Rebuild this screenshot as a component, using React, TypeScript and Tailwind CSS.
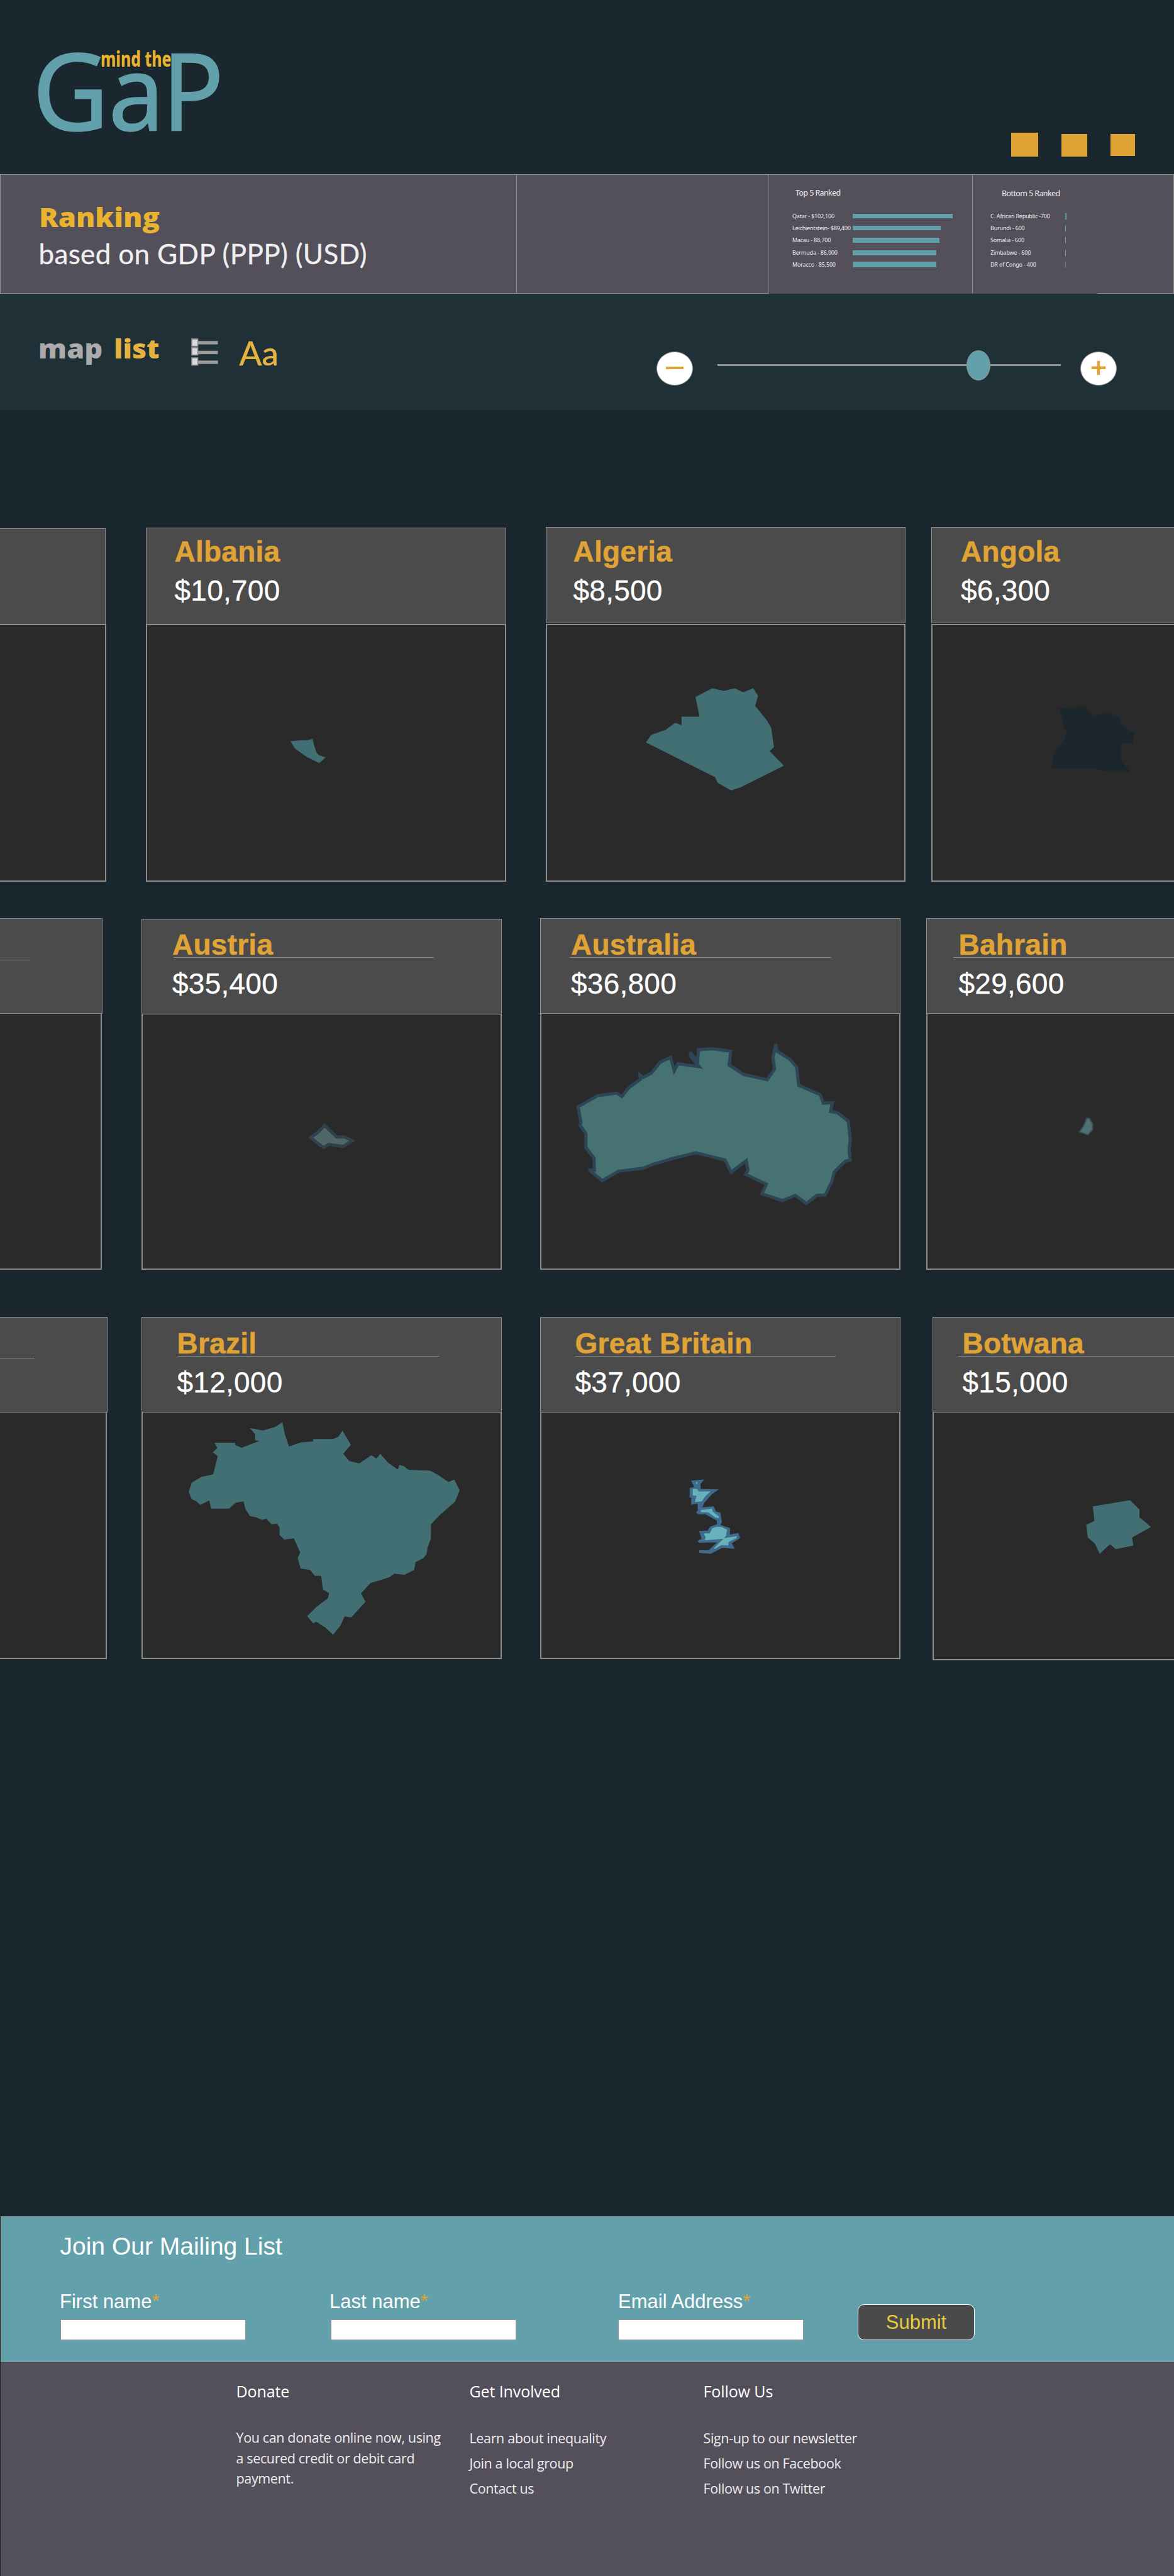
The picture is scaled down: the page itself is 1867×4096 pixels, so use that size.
import type { ReactNode } from 'react';

function Logo() {
  return (
    <svg className="block h-[277px] w-[400px]" viewBox="0 0 400 277" aria-label="mind the GaP">
      <g className='font-["Noto_Sans",sans-serif]' fill="#62a1ac" stroke="#62a1ac" strokeWidth="1.6" fontSize="170">
        <text transform="translate(51.5 207.2) scale(.985 1)">G</text>
        <text transform="translate(172.6 207.2) scale(.93 .97)">a</text>
        <text transform="translate(257.6 207.2) scale(.96 1)">P</text>
      </g>
      <text
        className='font-["Noto_Sans",sans-serif] font-extrabold'
        fill="#e9b32f"
        fontSize="33"
        x="160"
        y="106"
        textLength="112.5"
        lengthAdjust="spacingAndGlyphs"
      >
        mind the
      </text>
    </svg>
  );
}

const top5 = [
  { label: 'Qatar - $102,100', bar: 'h-[7px] w-[159px]' },
  { label: 'Leichientstein- $89,400', bar: 'h-[7px] w-[140.5px]' },
  { label: 'Macau - 88,700', bar: 'h-[8px] w-[138px]' },
  { label: 'Bermuda - 86,000', bar: 'h-[8px] w-[133.5px]' },
  { label: 'Moracco - 85,500', bar: 'h-[9px] w-[133.5px]' },
];

const bottom5 = [
  { label: 'C. African Republic -700', bar: 'h-[10px] w-[2px]' },
  { label: 'Burundi - 600', bar: 'h-[10px] w-px' },
  { label: 'Somalia - 600', bar: 'h-[10px] w-px' },
  { label: 'Zimbabwe - 600', bar: 'h-[10px] w-px' },
  { label: 'DR of Congo - 400', bar: 'h-[10px] w-px opacity-70' },
];

function Ranked({ items, labelClass }: { items: { label: string; bar: string }[]; labelClass: string }) {
  return (
    <ul>
      {items.map((item) => (
        <li key={item.label} className="flex h-[19.3px] items-center">
          <span className={`shrink-0 whitespace-nowrap text-[9px] tracking-[-0.2px] text-[#ececec] ${labelClass}`}>
            {item.label}
          </span>
          <span className={`bg-[#62a1ac] ${item.bar}`} />
        </li>
      ))}
    </ul>
  );
}

function RankingBand() {
  return (
    <section className="flex h-[190px] border-x border-t border-[#918f90] bg-[#53505b]">
      <div className="w-[821px] border-r border-b border-[#918f90] pl-[60.5px]">
        <h1 className='mt-[45px] w-fit origin-left scale-x-[1.055] font-["Open_Sans",sans-serif] text-[43px] leading-[43px] font-extrabold text-[#e9b32f]'>
          Ranking
        </h1>
        <p className='mt-[15px] font-["Lato",sans-serif] text-[44px] leading-[44px] tracking-[0.35px] text-[#f0eff0] [-webkit-text-stroke:0.3px_#f0eff0]'>
          based on GDP (PPP) (USD)
        </p>
      </div>
      <div className="w-[399px] border-b border-[#918f90]" />
      <div className='w-[325px] border-l border-[#918f90] pl-[38px] font-["Noto_Sans",sans-serif]'>
        <h2 className="mt-[22px] mb-[21px] pl-[5px] text-[12.5px] leading-[13px] tracking-[-0.6px] text-[#ececec]">
          Top 5 Ranked
        </h2>
        <Ranked items={top5} labelClass="w-[95.5px]" />
      </div>
      <div className='w-[199px] border-l border-[#918f90] pl-[28px] font-["Noto_Sans",sans-serif]'>
        <h2 className="mt-[23px] mb-[20px] pl-[18px] text-[12.5px] leading-[13px] tracking-[-0.6px] text-[#ececec]">
          Bottom 5 Ranked
        </h2>
        <Ranked items={bottom5} labelClass="w-[118.5px]" />
      </div>
      <div className="flex-1 border-b border-[#918f90]" />
    </section>
  );
}

function ListIcon() {
  return (
    <svg className="block h-[46px] w-[44px]" viewBox="0 0 44 46">
      {[5.2, 20.8, 36.3].map((y) => (
        <rect key={y} x="12" y={y} width="31.5" height="5.4" fill="#9c9c9c" />
      ))}
      {[2, 15.9, 32].map((y) => (
        <rect key={y} x="2" y={y} width="9.5" height="11.6" fill="#d9d9d9" stroke="#8f9092" strokeWidth="1.6" />
      ))}
    </svg>
  );
}

function Controls() {
  return (
    <section className="flex h-[185px] items-start bg-[#203037]">
      <a className='mt-[64.5px] ml-[60.5px] w-[120.5px] font-["Open_Sans",sans-serif] text-[43px] leading-[43px] font-extrabold text-[#ababab]'>
        <span className="inline-block origin-left scale-x-[1.05]">map</span>
      </a>
      <a className='mt-[64.5px] w-[121.5px] font-["Open_Sans",sans-serif] text-[43px] leading-[43px] font-extrabold text-[#e4b240]'>
        <span className="inline-block origin-left scale-x-[1.04]">list</span>
      </a>
      <div className="mt-[70px]">
        <ListIcon />
      </div>
      <span className='mt-[66.5px] ml-[34px] w-[663px] font-["Lato",sans-serif] text-[53px] leading-[53px] text-[#e8b33f] [-webkit-text-stroke:0.6px_#e8b33f]'>
        Aa
      </span>
      <button className="mt-[92px] flex h-[54px] w-[58px] items-center justify-center rounded-[50%] border border-[#949598] bg-white">
        <span className="mb-[2px] h-[4px] w-[28px] bg-[#e0a335]" />
      </button>
      <div className="relative mt-[90px] ml-[39px] flex h-[48px] w-[546px] items-center">
        <div className="mb-[1px] h-[3px] w-full bg-[#949598]" />
        <div className="absolute top-0 left-[396px] h-[48px] w-[38px] rounded-[50%] border border-[#949598] bg-[#62a1ac]" />
      </div>
      <button className="mt-[92px] ml-[31px] flex h-[54px] w-[58px] items-center justify-center rounded-[50%] border border-[#949598] bg-white">
        <svg className="mb-[2px] block h-[24px] w-[24px]" viewBox="0 0 24 24">
          <path d="M.7 11.7h22.6M12 0.7v22.6" stroke="#e0a335" strokeWidth="4.4" />
        </svg>
      </button>
    </section>
  );
}

type CardProps = {
  name?: string;
  price?: string;
  card: string;
  head: string;
  rule?: string;
  body: string;
  viewBox?: string;
  children?: ReactNode;
};

function Card({ name, price, card, head, rule = 'w-0', body, viewBox, children }: CardProps) {
  return (
    <article className={`flex shrink-0 flex-col ${card}`}>
      <header className={`shrink-0 border-[#8e8e8e] bg-[#4b4b4b] font-["Liberation_Sans",Arial,sans-serif] ${head}`}>
        <h3 className="h-[40px] text-[46px] leading-[40px] font-bold tracking-[0.25px] whitespace-nowrap text-[#e0a335] [-webkit-text-stroke:0.5px_#e0a335]">
          {name}
        </h3>
        <div className={`h-px bg-[#8e8e8e] ${rule}`} />
        <p className="mt-[18px] text-[46px] leading-[46px] tracking-[0.25px] text-white [-webkit-text-stroke:0.3px_#ffffff]">{price}</p>
      </header>
      <div className={`min-h-0 flex-1 border-[#8c8c8c] bg-[#2a2a2a] ${body}`}>
        {viewBox && (
          <svg className="block h-full w-full" viewBox={viewBox} preserveAspectRatio="none">
            {children}
          </svg>
        )}
      </div>
    </article>
  );
}

function Countries() {
  return (
    <main className="h-[2872px] overflow-hidden pt-[186px]">
      <div className="flex h-[564px] items-start">
        <Card card="mt-[2px] h-[562px] w-[169px]" head="mr-px h-[152px] border-t border-r" body="border-y-2 border-r-2" />
        <Card
          name="Albania"
          price="$10,700"
          card="mt-[1px] h-[563px] ml-[63px] w-[573px]"
          head="h-[153px] border border-b-0 pt-[17px] pl-[44.5px]"
          body="border-2"
          viewBox="393.4 453.3 955.4 1064.4"
        >
          <path
            d="M776 937L800 934 820 933 835 928 840 958 846 986 852 995 870 1005 853 1028 820 1003 788 968Z"
            fill="#416f74"
          />
        </Card>
        <Card
          name="Algeria"
          price="$8,500"
          card="h-[564px] ml-[62.5px] w-[572px]"
          head="mb-[1px] h-[153px] border pt-[18px] pl-[43px]"
          body="border-2"
          viewBox="35.5 453.3 872.6 1064.4"
        >
          <path
            d="M439 717L467 727 494 717 515 733 539 717 551 748 544 790 558 820 573 852 583 881 590 962 579 978 614 1039 508 1130 485 1142 452 1111 446 1087 277 942 290 911 325 890 349 860 364 870V835H408L398 753Z"
            fill="#416f74"
          />
        </Card>
        <Card
          name="Angola"
          price="$6,300"
          card="h-[564px] ml-[41.5px] w-[386px]"
          head="mb-[1px] h-[153px] border border-r-0 pt-[18px] pl-[46px]"
          body="border-2 border-r-0"
          viewBox="978 453.3 590 1064.4"
        >
          <path
            d="M1285 800L1350 793 1373 840 1399 813 1435 840 1441 870 1471 905 1467 947H1439V1022L1463 1065 1400 1064 1374 1049H1268L1276 980 1296 940 1308 900 1298 880 1296 842Z"
            fill="#1b262d"
          />
        </Card>
      </div>

      <div className="mt-[58px] flex h-[559px] items-start">
        <Card
          card="h-[559px] w-[162.5px]"
          head="h-[152px] border border-l-0 pt-[25px]"
          rule="w-[48px]"
          body="mr-px border-r-2 border-b-2"
        />
        <Card
          name="Austria"
          price="$35,400"
          card="mt-[1px] h-[558px] ml-[62px] w-[573px]"
          head="h-[152px] border pt-[20px] pl-[48.5px]"
          rule="ml-[2px] w-[414px]"
          body="border-2 border-t-0"
          viewBox="407.6 444.7 1023.5 1060.5"
        >
          <path
            d="M928 908L962 956 985 956 1007 972 980 996 940 987 925 1000 910 985 888 959 910 935Z"
            fill="#4f6766"
            stroke="#2e414c"
            strokeWidth="5"
            vectorEffect="non-scaling-stroke"
          />
        </Card>
        <Card
          name="Australia"
          price="$36,800"
          card="h-[559px] ml-[61.5px] w-[572.5px]"
          head="h-[152px] border pt-[21px] pl-[48px]"
          rule="-ml-[1.5px] w-[415px]"
          body="border-2 border-t-0"
          viewBox="22.4 442 873.4 1063"
        >
          <path
            d="M112 830L160 783 207 773 219 787 236 750 264 716 263 697 271 707 291 690 312 645 338 624 347 680 356 650 408 663 388 622 386 602 404 640 406 592 440 588 485 598 481 655 516 695 574 717 592 672 588 625 595 568 598 598 630 632 646 665 651 740 704 780 711 815 733 813 729 850 746 855 772 890 777 965 774 1010 777 1053 765 1057 738 1102 732 1142 716 1198 695 1200 670 1234 643 1200 611 1222 561 1193 572 1153 521 1112 527 1095 523 1055 486 1103 471 1052 400 1022 345 1045 295 1070 270 1087 211 1099 171 1138 138 1093 152 1094 151 1045 131 1000 131 942 117 908 119 895Z"
            fill="#467272"
            stroke="#2e4555"
            strokeWidth="5"
            strokeMiterlimit="3"
            vectorEffect="non-scaling-stroke"
          />
        </Card>
        <Card
          name="Bahrain"
          price="$29,600"
          card="h-[559px] ml-[41.5px] w-[394px]"
          head="h-[152px] border border-r-0 pt-[21px] pl-[50.5px]"
          rule="-ml-[9px] w-[360px]"
          body="border-l-2 border-b-2"
          viewBox="966 442 602 1063"
        >
          <path
            d="M1355 878L1361 878 1369 900 1369 925 1358 947 1337 935 1347 910Z"
            fill="#4f7072"
            stroke="#36505a"
            strokeWidth="2"
            vectorEffect="non-scaling-stroke"
          />
        </Card>
      </div>

      <div className="mt-[75px] flex h-[546px] items-start">
        <Card
          card="h-[544px] w-[170.5px]"
          head="h-[152px] border border-l-0 pt-[24px]"
          rule="w-[55px]"
          body="mr-px border-r-2 border-b-2"
        />
        <Card
          name="Brazil"
          price="$12,000"
          card="h-[544px] ml-[54px] w-[573px]"
          head="h-[152px] border pt-[21px] pl-[56px]"
          rule="ml-[1px] w-[415px]"
          body="border-2 border-t-0"
          viewBox="407.6 455.2 1023.5 1023.5"
        >
          <path
            d="M807 495L814 545 826 597 860 580 895 576V566H952L967 556 979 531 1003 590 981 627 998 657 1027 668 1062 633 1076 648 1087 628 1110 665 1137 693 1142 674 1154 679 1168 694 1230 698 1253 716 1282 745 1299 735 1314 780 1301 827 1256 885 1232 922V980L1222 1020 1220 1044 1211 1062 1188 1080 1184 1112 1157 1132 1127 1128 1113 1143 1059 1167 1032 1210 1045 1245 1004 1310 985 1306 973 1345 952 1382 930 1353 904 1328 895 1335 878 1305 904 1267 937 1231 941 1209 923 1193 918 1137H900L886 1112 859 1106 851 1062 858 1040 840 980 812 985 799 966V935L791 919 776 922 761 898 749 903 732 893 714 887 701 857 696 826 673 832 655 856H603L598 822 572 841 561 826 547 816 539 785 548 748 575 724 609 713 615 680 622 637 608 621 621 603 613 581H672V591L691 602 741 574 729 571V545L714 520 752 530 787 515Z"
            fill="#416f74"
          />
        </Card>
        <Card
          name="Great Britain"
          price="$37,000"
          card="h-[544px] ml-[61.5px] w-[572.5px]"
          head="h-[152px] border pt-[21px] pl-[54.5px]"
          rule="w-[414px]"
          body="border-2 border-t-0"
          viewBox="-1069.7 -453.2 2740.5 1879.9"
        >
          <path
            d="M78 69L178 60 150 95 152 132 290 136 238 172 178 240 165 274 252 265 266 303 302 314 315 388 302 408 376 432 375 482 440 470 453 508 390 550 413 592 315 584 228 630 140 622 141 602 212 602 278 542 138 544 128 532 158 512 138 454 205 452 226 420 277 402 275 375 190 328 130 326 116 312 130 296 127 245 78 254 80 200 66 198 67 124 102 118Z"
            fill="#3f6c8e"
          />
          <path
            d="M118 78L128 80 124 97 117 95ZM90 134L124 132 136 152 228 152 190 185 160 228 106 232 120 186 90 182ZM152 294L212 288 236 282 244 306 290 342 290 357 262 350 210 312 153 310ZM240 432L275 422 312 424 354 446 345 490 332 510 430 494 426 508 365 540 364 566 308 564 262 592 252 588 325 514 180 526 190 506 176 474 222 472Z"
            fill="#66b1ba"
          />
        </Card>
        <Card
          name="Botwana"
          price="$15,000"
          card="h-[546px] ml-[51px] w-[385px]"
          head="h-[152px] border border-r-0 pt-[21px] pl-[47px]"
          rule="-ml-[7px] w-[360px]"
          body="border-l-2 border-b-2"
          viewBox="980 455.2 587.8 1028.7"
        >
          <path
            d="M1368 847L1459 821 1482 860V892L1510 933 1464 977 1467 1010 1424 1025 1410 1004 1385 1045 1373 1002 1356 977 1352 924 1372 907Z"
            fill="#416f74"
          />
        </Card>
      </div>
    </main>
  );
}

function Field({ label, className, labelClass }: { label: string; className: string; labelClass: string }) {
  return (
    <label className={`flex w-[295px] flex-col ${className}`}>
      <span className={`text-[31px] leading-[31px] whitespace-nowrap text-white ${labelClass}`}>
        {label}
        <span className="text-[#e0a335]">*</span>
      </span>
      <input className="mt-[13px] h-[33px] w-full border border-[#949598] bg-white" />
    </label>
  );
}

function MailingList() {
  return (
    <section className='ml-px h-[232px] border-y border-l border-[#8f9795] bg-[#62a1ac] pt-[27px] font-["Liberation_Sans",Arial,sans-serif]'>
      <h2 className="ml-[93.5px] text-[39px] leading-[39px] text-white">Join Our Mailing List</h2>
      <form className="mt-[53px] flex items-start">
        <Field label="First name" className="ml-[94px]" labelClass="-ml-[1px]" />
        <Field label="Last name" className="ml-[135px]" labelClass="-ml-[2px]" />
        <Field label="Email Address" className="ml-[162px]" labelClass="" />
        <button
          type="button"
          className="mt-[20px] ml-[86px] h-[57px] w-[186px] rounded-[10px] border-[1.5px] border-white bg-[#4a4a4a] pb-px text-[31px] leading-[31px] text-[#e8cc3e]"
        >
          Submit
        </button>
      </form>
    </section>
  );
}

function Footer() {
  const heading = 'text-[25px] leading-[25px] tracking-[-0.1px] text-white font-medium';
  const text = 'text-[21.5px] tracking-[-0.36px] text-[#eeedef] whitespace-nowrap';
  return (
    <footer className='ml-px flex h-[340px] items-start bg-[#53505b] pt-[34px] pl-[374.5px] font-["Open_Sans",sans-serif]'>
      <div className="w-[371px]">
        <h4 className={heading}>Donate</h4>
        <p className={`mt-[45px] leading-[32.5px] ${text}`}>
          You can donate online now, using
          <br />a secured credit or debit card
          <br />
          payment.
        </p>
      </div>
      <div className="w-[372px]">
        <h4 className={heading}>Get Involved</h4>
        <ul className={`mt-[41.5px] leading-[40px] ${text}`}>
          <li>Learn about inequality</li>
          <li>Join a local group</li>
          <li>Contact us</li>
        </ul>
      </div>
      <div>
        <h4 className={heading}>Follow Us</h4>
        <ul className={`mt-[41.5px] leading-[40px] ${text}`}>
          <li>Sign-up to our newsletter</li>
          <li>Follow us on Facebook</li>
          <li>Follow us on Twitter</li>
        </ul>
      </div>
    </footer>
  );
}

export default function App() {
  return (
    <div className="h-[4096px] w-[1867px] overflow-hidden bg-[#1b272e]">
      <header className="flex h-[277px] items-start justify-between">
        <Logo />
        <nav className="mt-[211px] mr-[62.5px] flex gap-[37px]">
          <a className="h-[38px] w-[43px] bg-[#e0a335]" />
          <a className="mt-[2px] h-[36px] w-[41px] bg-[#e0a335]" />
          <a className="mt-[2px] h-[35px] w-[39px] bg-[#e0a335]" />
        </nav>
      </header>
      <RankingBand />
      <Controls />
      <Countries />
      <MailingList />
      <Footer />
    </div>
  );
}
